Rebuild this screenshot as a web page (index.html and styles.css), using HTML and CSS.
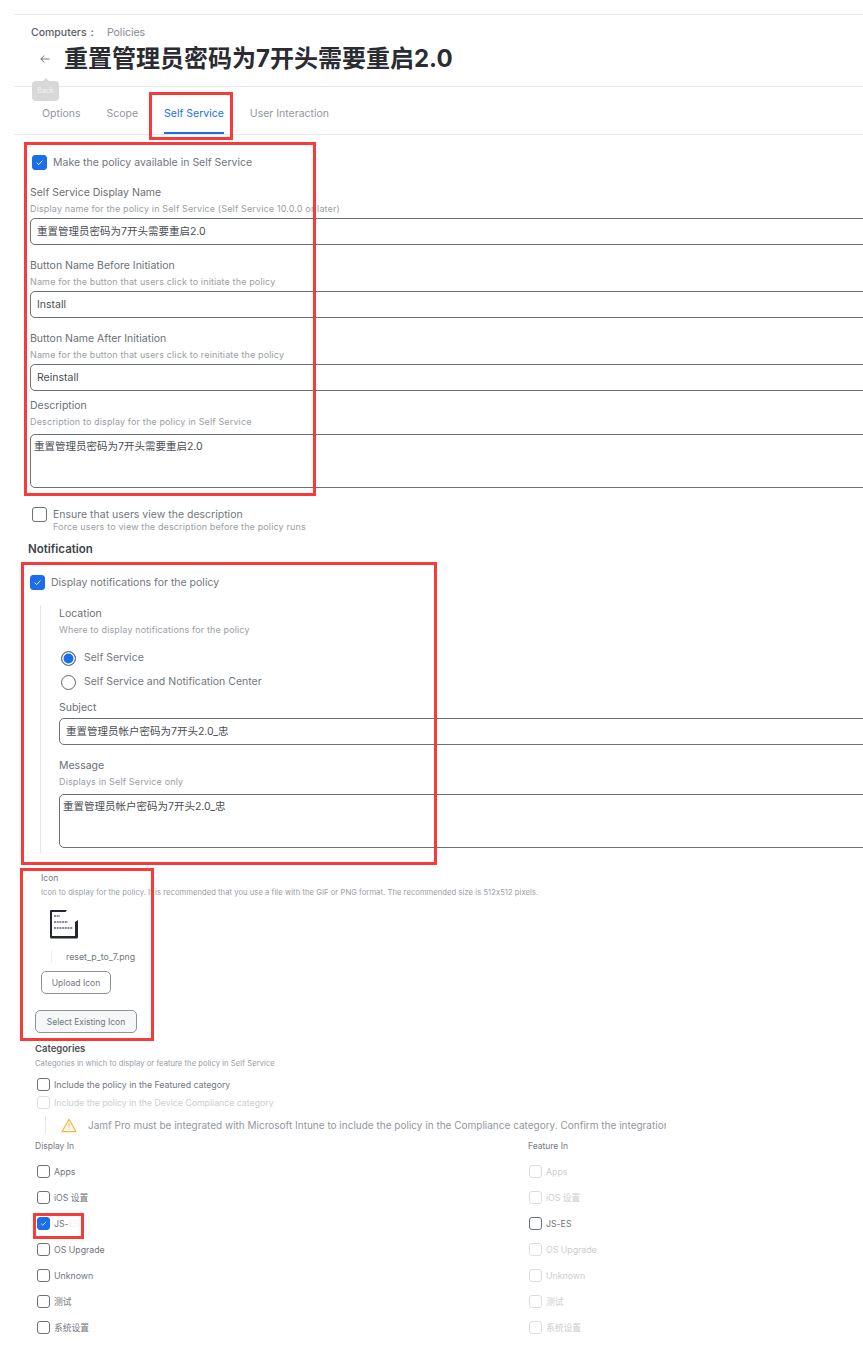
FILE: index.html
```html
<!DOCTYPE html>
<html lang="en">
<head>
<meta charset="utf-8">
<title>Policies</title>
<link rel="stylesheet" href="styles.css">
</head>
<body>
<div class="page">
  <header class="header">
    <div class="crumbs"><span class="crumb-strong">Computers</span><span class="crumb-sep">:</span><span class="crumb">Policies</span></div>
    <div class="title-row">
      <svg class="back" viewBox="0 0 12 12" width="12" height="12"><path d="M10.5 6H1.8M5.2 2.6 1.8 6l3.4 3.4" fill="none" stroke="#6b7280" stroke-width="1"/></svg>
      <h1 class="title">重置管理员密码为7开头需要重启2.0</h1>
    </div>
  </header>
  <nav class="tabs">
    <a class="tab">Options</a>
    <a class="tab">Scope</a>
    <a class="tab tab-active">Self Service</a>
    <a class="tab">User Interaction</a>
  </nav>

  <section class="main">
    <label class="check-row first-check"><span class="box checked"><svg viewBox="0 0 16 16"><path d="M4.5 8.2 7 10.6l4.6-5" fill="none" stroke="#fff" stroke-width="1.1"/></svg></span><span class="check-label">Make the policy available in Self Service</span></label>
    <div class="field f1">
      <div class="label">Self Service Display Name</div>
      <div class="help">Display name for the policy in Self Service (Self Service 10.0.0 or later)</div>
      <div class="input">重置管理员密码为7开头需要重启2.0</div>
    </div>
    <div class="field">
      <div class="label">Button Name Before Initiation</div>
      <div class="help">Name for the button that users click to initiate the policy</div>
      <div class="input">Install</div>
    </div>
    <div class="field">
      <div class="label">Button Name After Initiation</div>
      <div class="help">Name for the button that users click to reinitiate the policy</div>
      <div class="input">Reinstall</div>
    </div>
    <div class="field desc">
      <div class="label">Description</div>
      <div class="help help-wide">Description to display for the policy in Self Service</div>
      <div class="textarea">重置管理员密码为7开头需要重启2.0</div>
    </div>
    <div class="ensure">
      <span class="box"></span>
      <div>
        <div class="check-label">Ensure that users view the description</div>
        <div class="help">Force users to view the description before the policy runs</div>
      </div>
    </div>
    <h2 class="section-title">Notification</h2>
    <label class="check-row notif-check"><span class="box checked"><svg viewBox="0 0 16 16"><path d="M4.5 8.2 7 10.6l4.6-5" fill="none" stroke="#fff" stroke-width="1.1"/></svg></span><span class="check-label">Display notifications for the policy</span></label>
    <div class="notif">
      <div class="label">Location</div>
      <div class="help help-loc">Where to display notifications for the policy</div>
      <div class="radio-row r1"><span class="radio on"></span><span class="check-label">Self Service</span></div>
      <div class="radio-row r2"><span class="radio"></span><span class="check-label">Self Service and Notification Center</span></div>
      <div class="label subj">Subject</div>
      <div class="input">重置管理员帐户密码为7开头2.0_忠</div>
      <div class="label msg">Message</div>
      <div class="help help-msg">Displays in Self Service only</div>
      <div class="textarea">重置管理员帐户密码为7开头2.0_忠</div>
    </div>
    <div class="icon-block">
      <div class="small-label">Icon</div>
      <div class="small-help">Icon to display for the policy. It is recommended that you use a file with the GIF or PNG format. The recommended size is 512x512 pixels.</div>
      <svg class="policy-icon" viewBox="0 0 30 30" width="30" height="30">
        <path d="M1 2Q1 1 2 1H18L16.500 3H3V27H26V13L29 11V28Q29 29.500 27.500 29.500H2.500Q1 29.500 1 28Z" fill="#23262f"/>
        <path d="M5 7h6M5 13h14M5 19h19" stroke="#5a5ea8" stroke-width="1.400" stroke-dasharray="2 .7" fill="none"/>
      </svg>
      <div class="file-row"><span class="file-name">reset_p_to_7.png</span></div>
      <button class="btn btn-upload">Upload Icon</button>
      <button class="btn btn-select">Select Existing Icon</button>
    </div>
    <div class="categories">
      <div class="cat-title">Categories</div>
      <div class="small-help">Categories in which to display or feature the policy in Self Service</div>
      <div class="cat-check c1"><span class="box sm"></span><span class="opt">Include the policy in the Featured category</span></div>
      <div class="cat-check c2"><span class="box sm off"></span><span class="opt muted">Include the policy in the Device Compliance category</span></div>
      <div class="warn">
        <svg viewBox="0 0 16 15" width="16" height="15"><path d="M8 1.300 15 13.700H1Z" fill="none" stroke="#f5b83d" stroke-width="1.300" stroke-linejoin="round"/><path d="M8 5.500v4M8 10.800v1.200" stroke="#f5b83d" stroke-width="1.200"/></svg>
        <span class="warn-text">Jamf Pro must be integrated with Microsoft Intune to include the policy in the Compliance category. Confirm the integration</span>
      </div>
      <div class="columns">
        <div class="col">
          <div class="col-title">Display In</div>
          <div class="opt-row"><span class="box sm"></span><span class="opt">Apps</span></div>
          <div class="opt-row"><span class="box sm"></span><span class="opt">iOS 设置</span></div>
          <div class="opt-row"><span class="box sm checked"><svg viewBox="0 0 16 16"><path d="M4.500 8.200 7 10.600l4.600-5" fill="none" stroke="#fff" stroke-width="1.100"/></svg></span><span class="opt">JS-<span class="redacted">ES</span></span></div>
          <div class="opt-row"><span class="box sm"></span><span class="opt">OS Upgrade</span></div>
          <div class="opt-row"><span class="box sm"></span><span class="opt">Unknown</span></div>
          <div class="opt-row"><span class="box sm"></span><span class="opt">测试</span></div>
          <div class="opt-row"><span class="box sm"></span><span class="opt">系统设置</span></div>
        </div>
        <div class="col col-right">
          <div class="col-title">Feature In</div>
          <div class="opt-row"><span class="box sm off"></span><span class="opt muted">Apps</span></div>
          <div class="opt-row"><span class="box sm off"></span><span class="opt muted">iOS 设置</span></div>
          <div class="opt-row"><span class="box sm"></span><span class="opt">JS-ES</span></div>
          <div class="opt-row"><span class="box sm off"></span><span class="opt muted">OS Upgrade</span></div>
          <div class="opt-row"><span class="box sm off"></span><span class="opt muted">Unknown</span></div>
          <div class="opt-row"><span class="box sm off"></span><span class="opt muted">测试</span></div>
          <div class="opt-row"><span class="box sm off"></span><span class="opt muted">系统设置</span></div>
        </div>
      </div>
    </div>
  </section>

  <div class="tooltip">Back</div>
  <div class="mark m1"></div>
  <div class="mark m2"></div>
  <div class="mark m3"></div>
  <div class="mark m4"></div>
  <div class="mark m5"></div>
</div>
</body>
</html>
```
FILE: styles.css
```css
* { box-sizing: border-box; }
html, body { margin: 0; padding: 0; height: 100%; overflow: hidden; background: #fff; }
body { font-family: Inter, "Noto Sans CJK SC", sans-serif; color: #6b6f76; }
.page { position: relative; width: 863px; height: 1357px; overflow: hidden; padding-top: 14px; }

.header { margin-left: 14px; height: 73px; border-top: 1px solid #e8e8e8; border-bottom: 1px solid #e8e8e8; padding: 11px 0 0 17px; }
.crumbs { display: flex; align-items: center; font-size: 10.500px; line-height: 14px; }
.crumb-strong { color: #5c6068; font-weight: 500; }
.crumb-sep { margin: 0 13px 0 4px; font-weight: 600; color: #5c6068; }
.crumb { color: #84888f; }
.title-row { display: flex; align-items: center; margin-top: 3px; height: 32px; }
.back { margin-left: 8px; flex: none; }
.title { margin: 0 0 0 13px; font-size: 24px; line-height: 32px; font-weight: 700; color: #2a2c31; white-space: nowrap; }

.tabs { display: flex; height: 48px; margin-left: 14px; border-bottom: 1px solid #e8e8e8; padding-left: 28px; }
.tab { display: block; font-size: 10.500px; line-height: 14px; padding-top: 20px; color: #92969d; margin-right: 26px; height: 47px; }
.tab-active { color: #1a6fe8; border-bottom: 2.500px solid #1a6fe8; height: 47px; margin-right: 26px; }

.main { padding-left: 30px; }
.box { flex: none; display: block; width: 15px; height: 15px; border: 1px solid #6b6f76; border-radius: 3px; background: #fff; }
.box svg { display: block; width: 100%; height: 100%; }
.box.checked { background: #1a6fe8; border-color: #1a6fe8; }
.box.sm { width: 13px; height: 13px; }
.box.off { border-color: #dcdee2; }

.check-row { display: flex; align-items: center; gap: 6px; }
.first-check { margin: 20px 0 0 2px; height: 15px; }
.check-label { font-size: 10.500px; line-height: 14px; color: #72767d; white-space: nowrap; }

.field { margin-top: 14px; }
.f1 { margin-top: 16px; }
.desc { margin-top: 8px; }
.label { font-size: 10.500px; line-height: 14px; color: #6b6f76; margin-bottom: 3px; }
.help { font-size: 9px; line-height: 12px; color: #9a9ea5; white-space: nowrap; letter-spacing: .14px; }
.input { width: 860px; height: 27px; border: 1px solid #6b6f76; border-radius: 5px; font-size: 10.500px; line-height: 25px; padding-left: 6px; margin-top: 3px; color: #4a4d53; white-space: nowrap; }
.textarea { width: 860px; height: 54px; border: 1px solid #6b6f76; border-radius: 5px; font-size: 10.500px; line-height: 14px; padding: 5px 3px; margin-top: 6px; color: #4a4d53; }

.ensure { display: flex; gap: 6px; margin: 19px 0 0 2px; }
.ensure .check-label { margin-top: 1px; }
.ensure .help { margin-top: -1px; }
.section-title { margin: 8px 0 0 -2px; font-size: 11.500px; line-height: 16px; font-weight: 600; color: #40434a; }
.notif-check { margin-top: 18px; height: 15px; }

.notif { margin: 15px 0 0 10px; padding: 2px 0 5px 18px; border-left: 1px solid #e3e3e3; height: 248px; }
.help-loc { margin-top: 3px; }
.radio-row { display: flex; align-items: center; gap: 8px; margin-left: 2px; }
.r1 { margin-top: 14px; height: 16px; }
.r2 { margin-top: 8px; height: 16px; }
.radio { flex: none; width: 15px; height: 15px; border: 1px solid #63676e; border-radius: 50%; background: #fff; }
.radio.on { background: #1a6fe8; box-shadow: inset 0 0 0 1.500px #fff; }
.subj { margin-top: 11px; margin-bottom: 0; }
.notif .input { margin-top: 3px; }
.msg { margin-top: 14px; margin-bottom: 3px; }
.help-msg { margin-bottom: 0; }

.icon-block { margin: 19px 0 0 11px; position: relative; }
.small-label { font-size: 8.500px; line-height: 12px; color: #74787f; }
.small-help { font-size: 7.600px; line-height: 10px; color: #989ca3; white-space: nowrap; margin-top: 4px; letter-spacing: .06px; }
.policy-icon { display: block; margin: 11px 0 0 8px; }
.file-row { margin: 11px 0 0 10px; padding-left: 14px; border-left: 1px solid #eceef0; height: 13px; }
.file-name { display: block; font-size: 8.800px; line-height: 13px; color: #72767d; }
.btn { display: block; font-family: inherit; font-size: 8.500px; color: #72767d; border: 1px solid #8f9399; border-radius: 5px; background: #fff; padding: 0; height: 23px; white-space: nowrap; }
.btn-upload { width: 70px; margin-top: 8px; }
.btn-select { width: 102px; margin: 16px 0 0 -6px; background: #f6f7f8; }

.categories { margin: 10px 0 0 5px; }
.cat-title { font-size: 9.500px; line-height: 12px; font-weight: 600; color: #4c4f55; }
.categories .small-help { margin-top: 4px; }
.cat-check { display: flex; align-items: center; gap: 4px; margin-left: 2px; height: 14px; }
.c1 { margin-top: 8px; }
.c2 { margin-top: 4px; }
.opt { font-size: 8.800px; line-height: 13px; color: #72767d; white-space: nowrap; letter-spacing: -.03px; }
.muted { color: #ccced2; }
.redacted { color: #f2f2f2; }

.warn { display: flex; align-items: center; width: 621px; height: 18px; margin: 7px 0 0 10px; padding-left: 15px; border-left: 1px solid #e8e8e8; overflow: hidden; }
.warn svg { flex: none; }
.warn-text { margin-left: 11px; font-size: 10px; line-height: 14px; color: #92969d; white-space: nowrap; }

.columns { display: grid; grid-template-columns: 493px 1fr; margin-top: 6px; }
.col-title { font-size: 8.500px; line-height: 12px; color: #74787f; margin-bottom: 6px; }
.opt-row { display: flex; align-items: center; gap: 4px; height: 26px; margin-left: 2px; }
.col-right .opt-row { margin-left: 1px; }

.tooltip { position: absolute; left: 32px; top: 81px; width: 27px; height: 20px; border-radius: 4px; background: #d8d8d8; color: #f4f4f4; font-size: 7px; line-height: 20px; text-align: center; }
.tooltip::before { content: ""; position: absolute; top: -3px; left: 11px; border-left: 3px solid transparent; border-right: 3px solid transparent; border-bottom: 3px solid #d8d8d8; }

.mark { position: absolute; border: 3px solid #f83a3a; pointer-events: none; }
.m1 { left: 149px; top: 92px; width: 84px; height: 48px; }
.m2 { left: 24px; top: 142px; width: 292px; height: 354px; }
.m3 { left: 21px; top: 562px; width: 416px; height: 303px; }
.m4 { left: 20px; top: 868px; width: 134px; height: 173px; }
.m5 { left: 33px; top: 1213px; width: 51px; height: 26px; }
```
